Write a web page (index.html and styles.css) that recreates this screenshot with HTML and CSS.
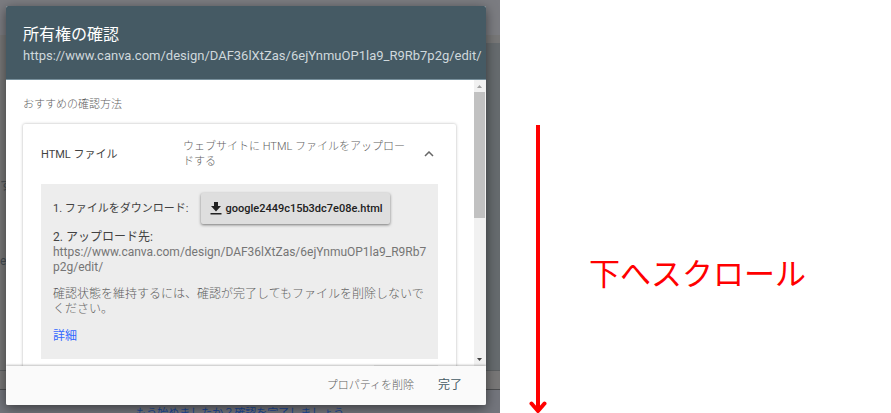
FILE: index.html
```html
<!DOCTYPE html>
<html lang="ja">

<head>
    <meta charset="UTF-8">
    <meta name="viewport" content="width=device-width, initial-scale=1.0">
    <title>所有権の確認</title>
    <link rel="stylesheet" href="styles.css">
</head>

<body>
    <main class="page">
        <section class="screen">
            <div class="backdrop">
                <div class="backdrop-top"></div>
                <div class="backdrop-body">
                    <span class="peek">す</span>
                    <span class="peek">e</span>
                </div>
                <div class="backdrop-strip"></div>
                <div class="backdrop-bottom">
                    <a class="backdrop-link" href="#">もう始めましたか？確認を完了しましょう</a>
                </div>
            </div>
            <div class="dialog" role="dialog" aria-labelledby="dialog-title">
                <header class="dialog-header">
                    <h1 id="dialog-title">所有権の確認</h1>
                    <p>https://www.canva.com/design/DAF36lXtZas/6ejYnmuOP1la9_R9Rb7p2g/edit/</p>
                </header>
                <div class="dialog-body">
                    <div class="content">
                        <h2>おすすめの確認方法</h2>
                        <div class="card">
                            <div class="card-head">
                                <h3>HTML ファイル</h3>
                                <p>ウェブサイトに HTML ファイルをアップロードする</p>
                                <button class="toggle" type="button" aria-label="閉じる">
                                    <svg viewBox="0 0 10 6" width="10" height="6">
                                        <path d="M1 5l4-4 4 4" fill="none" stroke="#666" stroke-width="1.5" />
                                    </svg>
                                </button>
                            </div>
                            <div class="steps">
                                <div class="step">
                                    <span>1. ファイルをダウンロード:</span>
                                    <button class="download" type="button">
                                        <svg viewBox="0 0 12 13" width="12" height="13">
                                            <path d="M4 0h4v4h3L6 9.500 1 4h3zM0.500 11h11v1.500h-11z" fill="#212121" />
                                        </svg>
                                        google2449c15b3dc7e08e.html
                                    </button>
                                </div>
                                <div class="upload">
                                    <h4>2. アップロード先:</h4>
                                    <p>https://www.canva.com/design/DAF36lXtZas/6ejYnmuOP1la9_R9Rb7p2g/edit/</p>
                                </div>
                                <p class="note">確認状態を維持するには、確認が完了してもファイルを削除しないでください。</p>
                                <a class="more" href="#">詳細</a>
                            </div>
                            <div class="card-foot">
                                <span class="verify"></span>
                            </div>
                        </div>
                    </div>
                    <div class="scrollbar">
                        <svg viewBox="0 0 11 12" width="11" height="12">
                            <path d="M3 8l2.500-3L8 8z" fill="#a0a0a0" />
                        </svg>
                        <div class="thumb"></div>
                        <svg class="down" viewBox="0 0 11 12" width="11" height="12">
                            <path d="M3 4l2.500 3L8 4z" fill="#444" />
                        </svg>
                    </div>
                </div>
                <footer class="dialog-footer">
                    <button class="remove" type="button">プロパティを削除</button>
                    <button class="done" type="button">完了</button>
                </footer>
            </div>
        </section>
        <aside class="guide">
            <svg class="arrow" viewBox="0 0 18 290" width="18" height="290">
                <path d="M9 1v285" fill="none" stroke="#f00" stroke-width="4" />
                <path d="M2.500 279.500L9 287l6.500-7.500" fill="none" stroke="#f00" stroke-width="4" stroke-linecap="round" stroke-linejoin="round" />
            </svg>
            <p>下へスクロール</p>
        </aside>
    </main>
</body>

</html>
```
FILE: styles.css
```css
* {
    margin: 0;
    padding: 0;
    box-sizing: border-box;
}

body {
    font-family: Roboto, "Noto Sans CJK JP", sans-serif;
    font-size: 12px;
    line-height: 15px;
    color: #424242;
    background-color: #fff;
}

h1,
h2,
h3,
h4 {
    font-size: inherit;
    font-weight: 400;
}

button {
    font: inherit;
    border: none;
    background: none;
    cursor: pointer;
}

a {
    text-decoration: none;
}

.page {
    display: grid;
    grid-template-columns: 500fr 391fr;
    height: 100vh;
    overflow: hidden;
}

/* dimmed page behind the dialog */
.screen {
    position: relative;
    display: flex;
    padding: 6px 14px 9px 6px;
    overflow: hidden;
}

.backdrop {
    position: absolute;
    inset: 0;
    display: flex;
    flex-direction: column;
    background-color: #5f6368;
}

.backdrop-top {
    height: 43px;
    background-color: #7b7c81;
    border-bottom: 8px solid #777;
}

.backdrop-body {
    flex: 1;
    display: flex;
    flex-direction: column;
    gap: 60px;
    padding-top: 136px;
    background: linear-gradient(90deg, #777 50%, #666b6e 50%);
}

.peek {
    color: #444c52;
}

.backdrop-strip {
    height: 20px;
    background-color: #787777;
    border-top: 1px solid #5c5f61;
    border-bottom: 1px solid #4c4d4f;
}

.backdrop-bottom {
    height: 24px;
    padding-top: 16px;
    text-align: center;
    background-color: #73757c;
}

.backdrop-link {
    padding-right: 20px;
    font-size: 11px;
    color: #1d4794;
}

/* dialog */
.dialog {
    position: relative;
    flex: 1;
    display: flex;
    flex-direction: column;
    min-width: 0;
    background-color: #fff;
    border-radius: 2px;
    box-shadow: 0 3px 12px rgba(0, 0, 0, 0.5);
    overflow: hidden;
}

.dialog-header {
    padding: 17px 17px 15px;
    color: #cfd8dc;
    background-color: #455a64;
    border-bottom: 1px solid #78909c;
}

.dialog-header h1 {
    font-size: 16px;
    line-height: 24px;
    color: #fff;
}

.dialog-header p {
    font-size: 13px;
    line-height: 17px;
    white-space: nowrap;
}

.dialog-body {
    flex: 1;
    display: flex;
    min-height: 0;
}

.content {
    flex: 1;
    min-width: 0;
    padding: 17px 18px 0 17px;
    overflow: hidden;
}

.content h2 {
    font-size: 11px;
    line-height: 16px;
    font-weight: 300;
    color: #616161;
}

.card {
    margin-top: 11px;
    padding: 15px 18px;
    border-radius: 2px;
    box-shadow: 0 0 3px rgba(0, 0, 0, 0.3);
}

.card-head {
    display: grid;
    grid-template-columns: 142px 1fr 18px;
    align-items: center;
    padding-bottom: 15px;
    font-size: 11px;
}

.card-head p {
    padding-right: 10px;
    font-weight: 300;
    color: #616161;
}

.toggle {
    height: 18px;
    line-height: 6px;
}

.steps {
    padding: 9px 8px 15px 12px;
    background-color: #ededed;
}

.step {
    display: flex;
    align-items: center;
    gap: 13px;
    font-size: 11px;
}

.download {
    display: flex;
    align-items: center;
    gap: 3px;
    height: 31px;
    padding: 0 7px 0 9px;
    font-weight: 500;
    color: #212121;
    background-color: #dedede;
    border-radius: 2px;
    box-shadow: 0 1px 3px rgba(0, 0, 0, 0.5);
}

.upload {
    margin-top: 6px;
}

.upload p {
    color: #757575;
    word-break: break-all;
}

.note {
    margin: 12px 0;
    font-weight: 300;
    color: #616161;
}

.more {
    color: #3367ff;
}

.card-foot {
    display: flex;
    justify-content: flex-end;
    padding-top: 6px;
}

.verify {
    width: 64px;
    height: 30px;
    background-color: #eee;
}

.scrollbar {
    display: flex;
    flex-direction: column;
    width: 12px;
    background-color: #f1f1f1;
}

.thumb {
    height: 44%;
    margin-right: 1px;
    background-color: #c1c1c1;
}

.down {
    margin-top: auto;
}

.dialog-footer {
    display: flex;
    justify-content: flex-end;
    align-items: center;
    gap: 24px;
    height: 39px;
    padding-right: 24px;
    background-color: #fafafa;
    box-shadow: 0 -1px 2px rgba(0, 0, 0, 0.25);
}

.remove {
    font-size: 11px;
    font-weight: 300;
    color: #616161;
}

.done {
    font-size: 12px;
    color: #455a64;
}

/* scroll hint */
.guide {
    display: flex;
    gap: 42px;
    padding: 124px 0 0 29px;
    color: #f00;
}

.arrow {
    flex: none;
}

.guide p {
    padding-top: 127px;
    font-family: "Noto Sans CJK JP", sans-serif;
    font-size: 31px;
    line-height: 42px;
    white-space: nowrap;
}
```
